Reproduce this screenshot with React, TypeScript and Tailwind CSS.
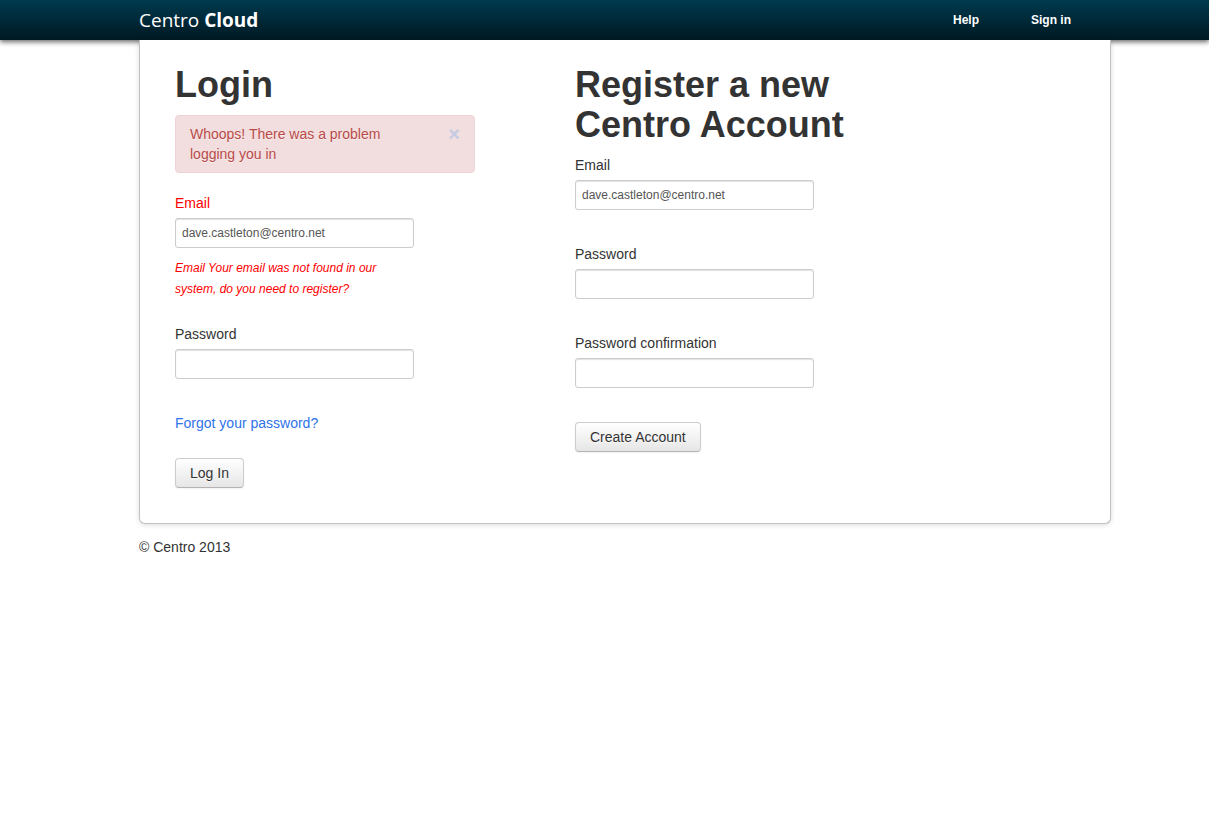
import { useState } from "react";
import type { ReactNode } from "react";

type FieldProps = {
  id: string;
  label: string;
  type: string;
  value?: string;
  error?: string;
};

function Field({ id, label, type, value, error }: FieldProps) {
  return (
    <div className="flex flex-col items-start">
      <label htmlFor={id} className={error ? "mb-[5px] text-[#f00]" : "mb-[5px]"}>
        {label}
      </label>
      <input
        id={id}
        type={type}
        defaultValue={value}
        aria-invalid={error ? true : undefined}
        aria-describedby={error ? `${id}-error` : undefined}
        className="h-[30px] w-full max-w-[239px] rounded-[3px] border border-[#ccc] bg-white px-1.5 text-[12px] text-[#555] shadow-[inset_0_1px_1px_rgba(0,0,0,0.12)] outline-none focus:border-[#52a8ec]"
      />
      {error && (
        <p id={`${id}-error`} className="mt-2.5 max-w-[239px] text-[12px] leading-[21px] text-[#f00] italic">
          {error}
        </p>
      )}
    </div>
  );
}

function Button({ children }: { children: ReactNode }) {
  return (
    <button
      type="submit"
      className="h-[30px] cursor-pointer self-start rounded-[4px] border border-[#ccc] border-b-[#b3b3b3] bg-linear-to-b from-white to-[#e6e6e6] px-3.5 text-[#333] shadow-[inset_0_1px_0_rgba(255,255,255,0.2),0_1px_2px_rgba(0,0,0,0.05)] [text-shadow:0_1px_1px_rgba(255,255,255,0.75)]"
    >
      {children}
    </button>
  );
}

function Alert({ children }: { children: ReactNode }) {
  const [open, setOpen] = useState(true);
  if (!open) return null;
  return (
    <div
      role="alert"
      className="mb-5 flex items-start justify-between gap-9 rounded-[4px] border border-[#eed3d7] bg-[#f2dede] px-3.5 py-2 text-[#b94a48] [text-shadow:0_1px_0_rgba(255,255,255,0.5)]"
    >
      <p>{children}</p>
      <button
        type="button"
        aria-label="Close"
        onClick={() => setOpen(false)}
        className="cursor-pointer text-[20px] leading-5 font-bold text-[#c3cbe3]"
      >
        ×
      </button>
    </div>
  );
}

export default function App() {
  return (
    <div className="min-h-screen bg-white font-['Liberation_Sans',Arial,sans-serif] text-[14px] leading-5 text-[#333]">
      <header className="bg-linear-to-b from-[#003a4f] to-[#001923] pl-[41px] text-white shadow-[0_2px_5px_rgba(0,0,0,0.6)]">
        <div className="mx-auto flex h-10 max-w-[972px] items-center justify-between">
          <a href="#" className="font-['Open_Sans','Noto_Sans',sans-serif] text-[19px]">
            Centro <b>Cloud</b>
          </a>
          <nav className="flex gap-[52px] pr-10 text-[12px] font-bold">
            <a href="#help">Help</a>
            <a href="#login">Sign in</a>
          </nav>
        </div>
      </header>

      <div className="pl-[41px]">
        <div className="relative mx-auto max-w-[972px]">
          <main className="flex gap-[100px] rounded-b-[6px] border border-t-0 border-[#bdc3c7] bg-white px-[35px] pt-[25px] pb-[35px] shadow-[0_1px_5px_rgba(0,0,0,0.15)]">
            <section id="login" className="w-[300px]">
              <h1 className="mb-2.5 text-[36px] leading-10 font-bold">Login</h1>
              <Alert>Whoops! There was a problem logging you in</Alert>
              <form className="flex flex-col gap-6" onSubmit={(e) => e.preventDefault()}>
                <Field
                  id="login-email"
                  label="Email"
                  type="email"
                  value="dave.castleton@centro.net"
                  error="Email Your email was not found in our system, do you need to register?"
                />
                <Field id="login-password" label="Password" type="password" />
                <a href="#forgot" className="mt-2.5 self-start leading-[21px] text-[#2f73ea]">
                  Forgot your password?
                </a>
                <Button>Log In</Button>
              </form>
            </section>

            <section id="register" className="w-[300px]">
              <h1 className="mb-2.5 text-[36px] leading-10 font-bold">Register a new Centro Account</h1>
              <form className="flex flex-col gap-[34px]" onSubmit={(e) => e.preventDefault()}>
                <Field id="register-email" label="Email" type="email" value="dave.castleton@centro.net" />
                <Field id="register-password" label="Password" type="password" />
                <Field id="register-confirmation" label="Password confirmation" type="password" />
                <Button>Create Account</Button>
              </form>
            </section>
          </main>
          <footer className="py-[13px]">© Centro 2013</footer>
        </div>
      </div>
    </div>
  );
}
